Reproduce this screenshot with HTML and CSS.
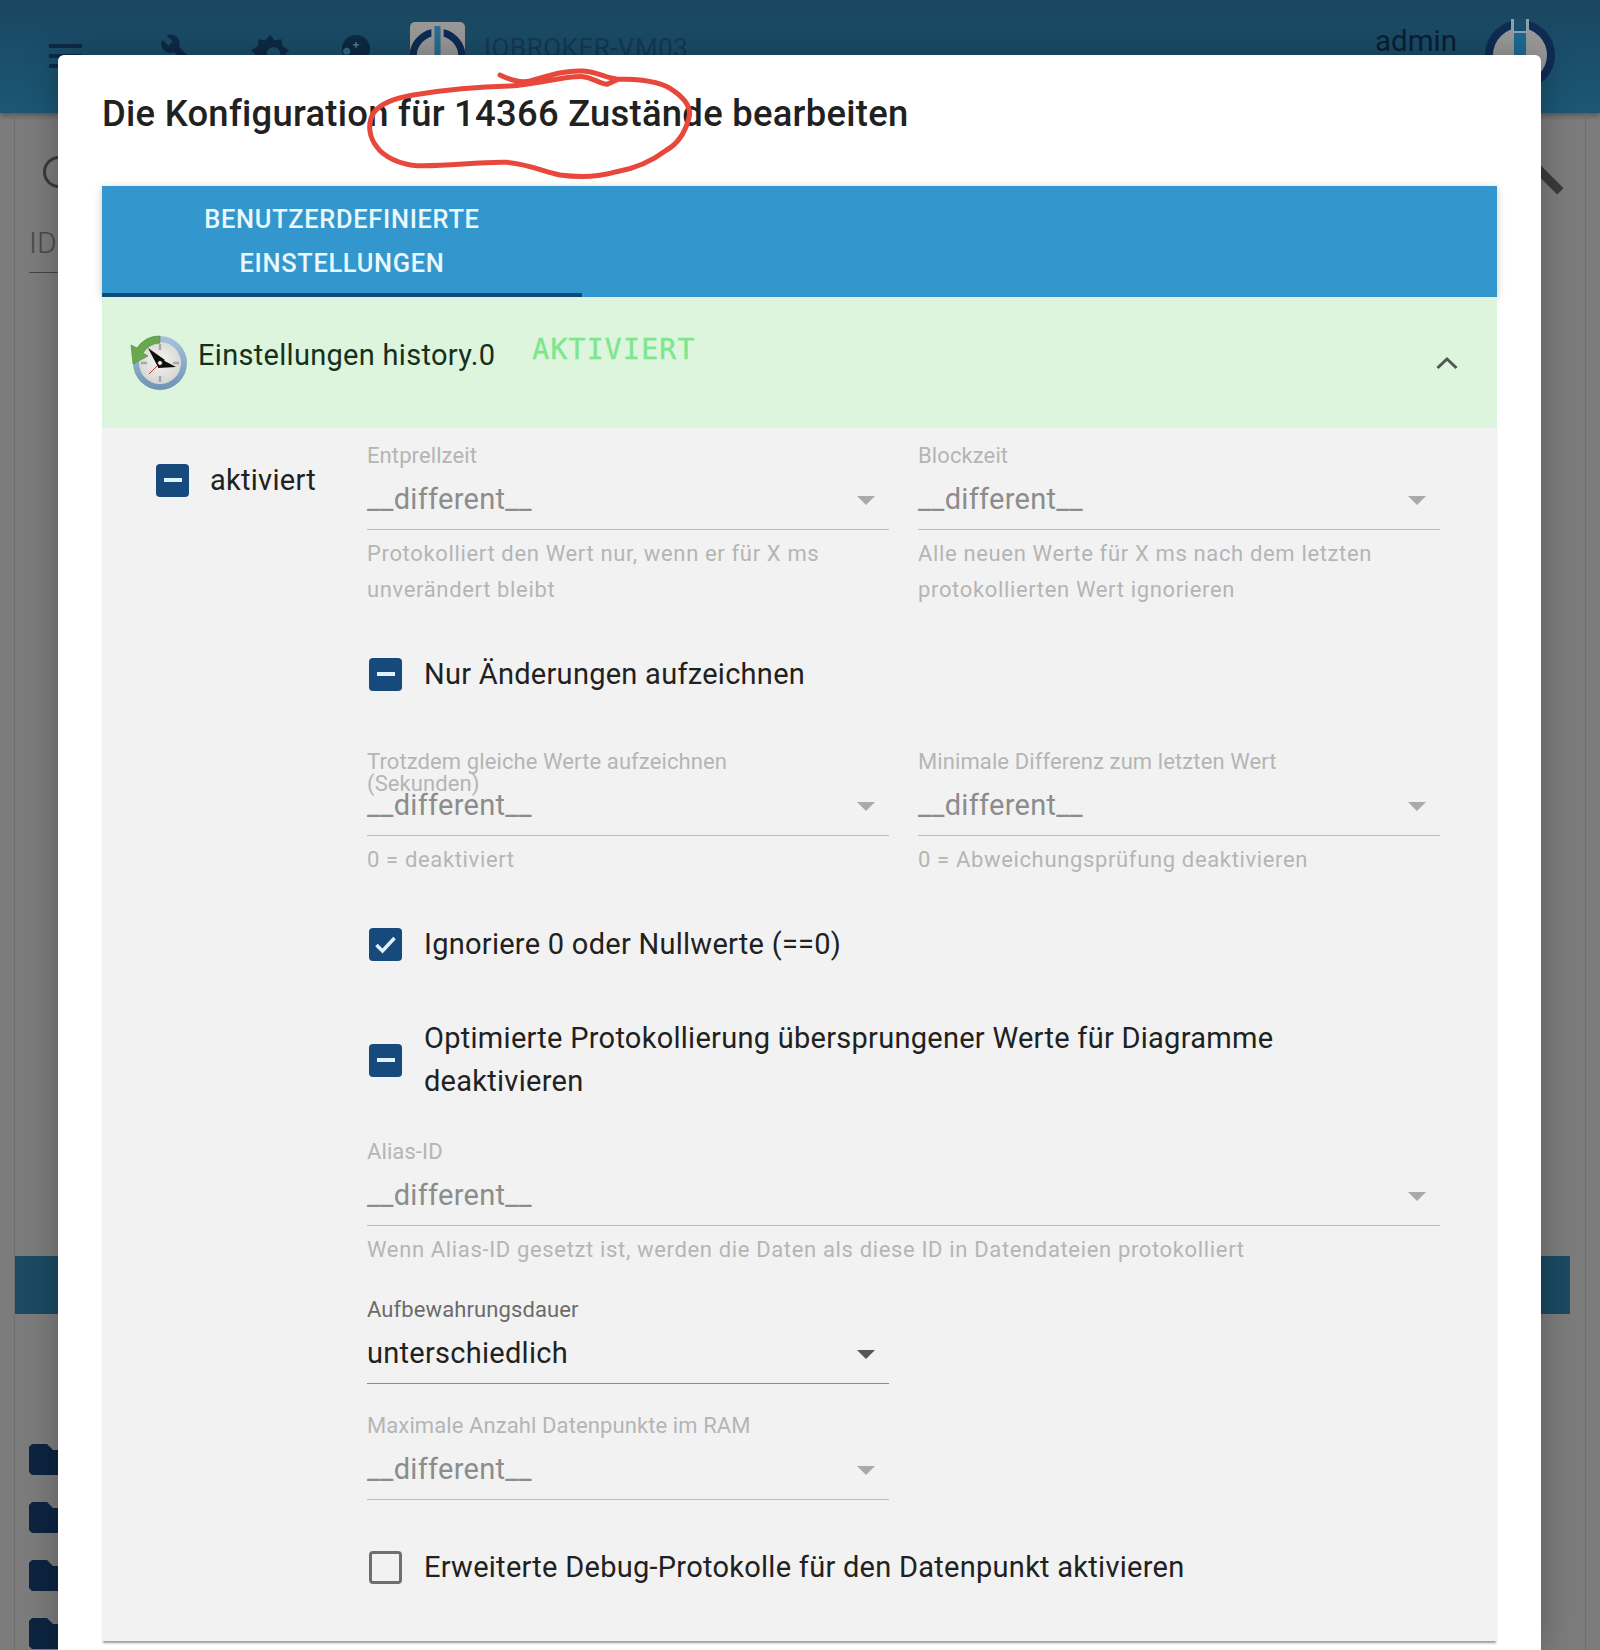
FILE: index.html
```html
<!DOCTYPE html>
<html lang="de">
<head>
  <meta charset="UTF-8">
  <title>Konfiguration bearbeiten</title>
  <link rel="stylesheet" href="styles.css">
</head>
<body>
  <header class="appbar">
    <div class="menu-icon"><span></span><span></span><span></span></div>
    <svg class="bar-icon wrench" viewBox="0 0 24 24"><path d="M1.300 19l9.100-9.100c-.9-2.300-.4-5 1.500-6.900 2-2 5-2.400 7.400-1.300L15 6l3 3 4.400-4.300c1.200 2.400.7 5.400-1.300 7.400-1.900 1.900-4.600 2.400-6.900 1.500l-9.100 9.100c-.4.4-1 .4-1.400 0l-2.300-2.300c-.5-.4-.5-1.100-.1-1.400z" transform="matrix(-1 0 0 1 24 0)"/></svg>
    <svg class="bar-icon gear" viewBox="0 0 24 24"><path d="M12 1l2.500 3.200 4-.6.6 4L23 10l-2.400 2 2.400 2-3.900 2.400-.6 4-4-.6L12 23l-2.500-3.200-4 .6-.6-4L1 14l2.400-2L1 10l3.900-2.400.6-4 4 .6z"/><circle cx="14" cy="12" r="4" fill="#1b4f6b"/></svg>
    <svg class="bar-icon dot" viewBox="0 0 24 24"><circle cx="12" cy="12" r="12"/><circle cx="4" cy="14" r="3" fill="#2c6d8f"/><path d="M12 6v5M9.500 8.500h5" stroke="#5d8ca6" stroke-width="1"/></svg>
    <div class="bar-logo">
      <svg viewBox="0 0 54 54"><circle cx="27" cy="34" r="24" fill="none" stroke="#0f2c54" stroke-width="7"/><rect x="21" y="4" width="12" height="46" fill="#9a9a9a"/><rect x="24" y="4" width="6" height="46" fill="#2a6d92"/></svg>
    </div>
    <span class="bar-title">IOBROKER-VM03</span>
    <span class="bar-user">admin</span>
    <svg class="bar-avatar" viewBox="0 0 72 72"><circle cx="36" cy="36" r="35" fill="#0f2c54"/><circle cx="36" cy="36" r="27" fill="#9a9a9a"/><rect x="27" y="0" width="18" height="14" fill="#8fa3ad"/><rect x="30" y="0" width="12" height="12" fill="#1b4f6b"/><rect x="30" y="14" width="12" height="36" fill="#1e6a94"/></svg>
  </header>

  <main class="page">
    <div class="toolbar">
      <span class="search-ring"></span>
      <span class="search-handle"></span>
    </div>
    <div class="id-col">ID</div>
    <div class="list-head"></div>
    <ul class="folders">
      <li></li>
      <li></li>
      <li></li>
      <li></li>
    </ul>
  </main>

  <div class="dialog">
    <h2 class="dialog-title">Die Konfiguration für 14366 Zustände bearbeiten</h2>
    <svg class="scribble" viewBox="0 0 1050 420">
      <path d="M450 60C480 75 510 85 540 78C590 65 640 45 700 48C740 50 770 70 800 72C850 72 920 75 960 100C1000 125 1030 155 1015 195C1005 230 985 265 950 285C910 315 860 340 800 350C750 365 690 368 630 360C580 350 540 328 470 322C380 320 290 335 200 332C150 328 100 305 80 275C60 250 50 210 70 175C90 145 130 130 190 120C280 105 380 95 480 93C560 90 640 62 700 65C730 68 745 85 770 88L800 75"/>
    </svg>

    <div class="tabs">
      <div class="tab">BENUTZERDEFINIERTE<br>EINSTELLUNGEN</div>
    </div>

    <div class="acc-head">
      <svg class="clock" viewBox="0 0 60 60">
        <defs>
          <radialGradient id="face" cx="50%" cy="45%" r="55%"><stop offset="0" stop-color="#f6f4f0"/><stop offset="1" stop-color="#d6d6d4"/></radialGradient>
          <linearGradient id="ring" x1="0" y1="0" x2="0" y2="1"><stop offset="0" stop-color="#a9c3dc"/><stop offset="1" stop-color="#6f93b4"/></linearGradient>
        </defs>
        <circle cx="31" cy="31" r="27" fill="url(#ring)"/>
        <circle cx="31" cy="31" r="21" fill="url(#face)"/>
        <path d="M31 12v6M31 44v6M12 31h6M44 31h6" stroke="#a6a9ab" stroke-width="2.500"/>
        <path d="M31 4A27 27 0 0 0 8 16L2 13 4 32 19 24 14 21A21 21 0 0 1 31 11z" fill="#6aa84f" stroke="#4d8a3a" stroke-width=".6"/>
        <path d="M31 31L20 42" stroke="#b8352e" stroke-width="1"/>
        <path d="M19 16L36 28 29 35zM30 26L47 35 29 36z" fill="#0c0c0c"/>
        <circle cx="31" cy="31" r="2.300" fill="#fff" stroke="#222" stroke-width=".7"/>
      </svg>
      <span class="acc-title">Einstellungen history.0</span>
      <span class="acc-state">AKTIVIERT</span>
      <svg class="chevron" viewBox="0 0 24 14"><path d="M2.500 12L12 3l9.500 9"/></svg>
    </div>

    <div class="acc-body">
      <label class="check enabled-col">
        <span class="box"><span class="dash"></span></span>
        <span>aktiviert</span>
      </label>

      <div class="form">
        <div class="two">
          <div class="field">
            <div class="f-label">Entprellzeit</div>
            <div class="select"><span>__different__</span><i class="caret"></i></div>
            <div class="helper">Protokolliert den Wert nur, wenn er für X ms unverändert bleibt</div>
          </div>
          <div class="field">
            <div class="f-label">Blockzeit</div>
            <div class="select"><span>__different__</span><i class="caret"></i></div>
            <div class="helper">Alle neuen Werte für X ms nach dem letzten protokollierten Wert ignorieren</div>
          </div>
        </div>

        <label class="check row">
          <span class="box"><span class="dash"></span></span>
          <span>Nur Änderungen aufzeichnen</span>
        </label>

        <div class="two gap-l">
          <div class="field">
            <div class="f-label">Trotzdem gleiche Werte aufzeichnen (Sekunden)</div>
            <div class="select"><span>__different__</span><i class="caret"></i></div>
            <div class="helper">0 = deaktiviert</div>
          </div>
          <div class="field">
            <div class="f-label">Minimale Differenz zum letzten Wert</div>
            <div class="select"><span>__different__</span><i class="caret"></i></div>
            <div class="helper">0 = Abweichungsprüfung deaktivieren</div>
          </div>
        </div>

        <label class="check row">
          <span class="box">
            <svg viewBox="0 0 33 33"><path d="M7.500 17l6 6 12-13" fill="none" stroke="#dff1fd" stroke-width="3.500"/></svg>
          </span>
          <span>Ignoriere 0 oder Nullwerte (==0)</span>
        </label>

        <label class="check row tall">
          <span class="box"><span class="dash"></span></span>
          <span class="wrap">Optimierte Protokollierung übersprungener Werte für Diagramme deaktivieren</span>
        </label>

        <div class="field row alias">
          <div class="f-label">Alias-ID</div>
          <div class="select"><span>__different__</span><i class="caret"></i></div>
          <div class="helper">Wenn Alias-ID gesetzt ist, werden die Daten als diese ID in Datendateien protokolliert</div>
        </div>

        <div class="field half gap-s active">
          <div class="f-label">Aufbewahrungsdauer</div>
          <div class="select"><span>unterschiedlich</span><i class="caret"></i></div>
        </div>

        <div class="field half gap-s">
          <div class="f-label">Maximale Anzahl Datenpunkte im RAM</div>
          <div class="select"><span>__different__</span><i class="caret"></i></div>
        </div>

        <label class="check row last">
          <span class="box empty"></span>
          <span>Erweiterte Debug-Protokolle für den Datenpunkt aktivieren</span>
        </label>
      </div>
    </div>
  </div>
</body>
</html>
```

FILE: styles.css
```css
* {
  box-sizing: border-box;
}
html, body {
  margin: 0;
  height: 1650px;
  overflow: hidden;
}
body {
  position: relative;
  font-family: Roboto, "Liberation Sans", sans-serif;
  background-color: #7c7c7c;
  color: #212121;
}

/* app behind the dialog */
.appbar {
  height: 113px;
  display: flex;
  align-items: flex-start;
  background: linear-gradient(#1a4660, #1b5775);
  color: #0a1f35;
  box-shadow: 0 2px 6px rgba(0,0,0,.35);
}
.menu-icon {
  width: 33px;
  margin: 44px 0 0 49px;
  display: flex;
  flex-direction: column;
  gap: 6px;
}
.menu-icon span {
  height: 4px;
  background-color: #0d2a45;
}
.bar-icon {
  fill: #0d2a45;
  margin-top: 33px;
  flex: none;
}
.wrench { width: 34px; height: 34px; margin-left: 78px; }
.gear { width: 42px; height: 42px; margin-left: 55px; }
.dot { width: 28px; height: 28px; margin-left: 51px; margin-top: 35px; }
.bar-logo {
  width: 55px;
  height: 60px;
  margin: 22px 0 0 40px;
  background-color: #999;
  border-radius: 5px;
}
.bar-logo svg {
  display: block;
  width: 100%;
}
.bar-title {
  margin: 32px 0 0 19px;
  font-size: 26px;
  line-height: 32px;
  color: #123a55;
  letter-spacing: .5px;
}
.bar-user {
  margin: 23px 0 0 auto;
  font-size: 29.500px;
  line-height: 36px;
}
.bar-avatar {
  width: 72px;
  height: 72px;
  margin: 19px 44px 0 27px;
}

.page {
  margin: 0 14px;
  height: 1537px;
  border-left: 1px solid #6f6f6f;
  border-right: 1px solid #6f6f6f;
  position: relative;
}
.toolbar {
  height: 115px;
  padding-top: 43px;
  display: flex;
  justify-content: space-between;
}
.search-ring {
  width: 32px;
  height: 32px;
  margin-left: 28px;
  border: 3px solid #3a3a3a;
  border-radius: 50%;
}
.search-handle {
  width: 9px;
  height: 45px;
  margin: -3px 36px 0 0;
  background-color: #3a3a3a;
  transform: rotate(-45deg);
}
.id-col {
  width: 60px;
  margin-left: 14px;
  padding-bottom: 14px;
  font-size: 30px;
  font-weight: 300;
  line-height: 30px;
  color: #4a4a4a;
  border-bottom: 1px solid #444;
}
.list-head {
  height: 58px;
  margin: 983px 15px 0 0;
  background-color: #1b4a62;
}
.folders {
  list-style: none;
  margin: 130px 0 0 14px;
  padding: 0;
}
.folders li {
  width: 60px;
  height: 31px;
  margin-bottom: 27px;
  background-color: #0c2440;
  clip-path: polygon(3px 0, 18px 0, 24px 6px, 100% 6px, 100% 100%, 3px 100%, 0 calc(100% - 3px), 0 3px);
}

/* dialog */
.dialog {
  position: absolute;
  left: 58px;
  top: 55px;
  width: 1483px;
  height: 1595px;
  padding: 0 44px;
  background-color: #fff;
  border-radius: 6px 6px 0 0;
  box-shadow: 0 0 34px rgba(0,0,0,.28);
}
.dialog-title {
  margin: 0;
  height: 131px;
  padding-top: 37px;
  font-size: 36.400px;
  line-height: 44px;
  font-weight: 500;
  letter-spacing: .27px;
}
.scribble {
  position: absolute;
  left: 292px;
  top: 0;
  width: 350px;
  height: 140px;
}
.scribble path {
  fill: none;
  stroke: #e8483c;
  stroke-width: 15;
  stroke-linecap: round;
  stroke-linejoin: round;
}
.tabs {
  height: 111px;
  background-color: #3397cd;
  box-shadow: 0 2px 8px rgba(0,0,0,.22);
  position: relative;
}
.tab {
  width: 480px;
  height: 111px;
  padding-top: 11px;
  text-align: center;
  font-size: 25.400px;
  line-height: 44px;
  font-weight: 500;
  letter-spacing: .7px;
  color: #eaf8fd;
  border-bottom: 4px solid #0f4c7c;
}
.acc-head {
  height: 131px;
  padding: 0 38px 0 30px;
  display: flex;
  align-items: flex-start;
  background-color: #dcf5dc;
  position: relative;
}
.clock {
  width: 60px;
  height: 60px;
  margin-top: 35px;
  flex: none;
  margin-left: -3px;
}
.acc-title {
  margin: 38px 0 0 9px;
  font-size: 29px;
  line-height: 40px;
  letter-spacing: .3px;
  color: #16301b;
}
.acc-state {
  margin: 35px 0 0 37px;
  font-family: "DejaVu Sans Mono", monospace;
  font-size: 28px;
  line-height: 36px;
  letter-spacing: 1.300px;
  color: #7ee68c;
  -webkit-text-stroke: .4px #7ee68c;
}
.chevron {
  width: 24px;
  height: 14px;
  margin: 59px 0 0 auto;
  fill: none;
  stroke: #555;
  stroke-width: 3;
}
.acc-body {
  height: 1213px;
  padding: 15px 58px 0 54px;
  display: flex;
  align-items: flex-start;
  background-color: #f2f2f2;
  box-shadow: 0 3px 2px -1px rgba(0,0,0,.4);
}
.check {
  display: flex;
  align-items: center;
  gap: 22px;
  font-size: 29px;
  line-height: 43px;
  letter-spacing: .27px;
  color: #212121;
}
.enabled-col {
  width: 211px;
  flex: none;
  height: 44px;
  margin-top: 15px;
  gap: 21px;
}
.box {
  width: 33px;
  height: 33px;
  flex: none;
  display: flex;
  align-items: center;
  justify-content: center;
  background-color: #174a7c;
  border-radius: 4px;
}
.box svg {
  display: block;
  width: 33px;
  height: 33px;
}
.dash {
  width: 18px;
  height: 4px;
  background-color: #dff1fd;
}
.box.empty {
  background: none;
  border: 3.500px solid #6f6f6f;
}
.form {
  width: 1073px;
  flex: none;
}
.two {
  display: grid;
  grid-template-columns: 522px 522px;
  gap: 29px;
}
.gap-l {
  margin-top: 47px;
}
.row {
  margin-top: 38px;
  margin-left: 2px;
  min-height: 56px;
}
.field.row {
  margin-left: 0;
}
.alias {
  margin-top: 36px;
}
.last {
  margin-top: 39px;
}
.tall {
  margin-top: 45px;
}
.wrap {
  width: 960px;
}
.half {
  width: 522px;
}
.gap-s {
  margin-top: 29px;
}
.field .f-label {
  max-width: 440px;
  height: 26px;
  padding-top: 2px;
  font-size: 22px;
  line-height: 22px;
  letter-spacing: .1px;
  color: #b5b5b5;
}
.select {
  height: 61px;
  padding-right: 14px;
  display: flex;
  align-items: center;
  justify-content: space-between;
  font-size: 29px;
  letter-spacing: .27px;
  color: #8c8c8c;
  border-bottom: 1px solid #bcbcbc;
}
.caret {
  width: 0;
  height: 0;
  margin-top: 2px;
  border-left: 9px solid transparent;
  border-right: 9px solid transparent;
  border-top: 9px solid #aaa;
}
.helper {
  margin-top: 6px;
  font-size: 22px;
  line-height: 36px;
  letter-spacing: .65px;
  color: #b5b5b5;
}
.active .f-label {
  color: #6b6b6b;
}
.active .select {
  color: #212121;
  border-bottom-color: #8a8a8a;
}
.active .caret {
  border-top-color: #555;
}
```
